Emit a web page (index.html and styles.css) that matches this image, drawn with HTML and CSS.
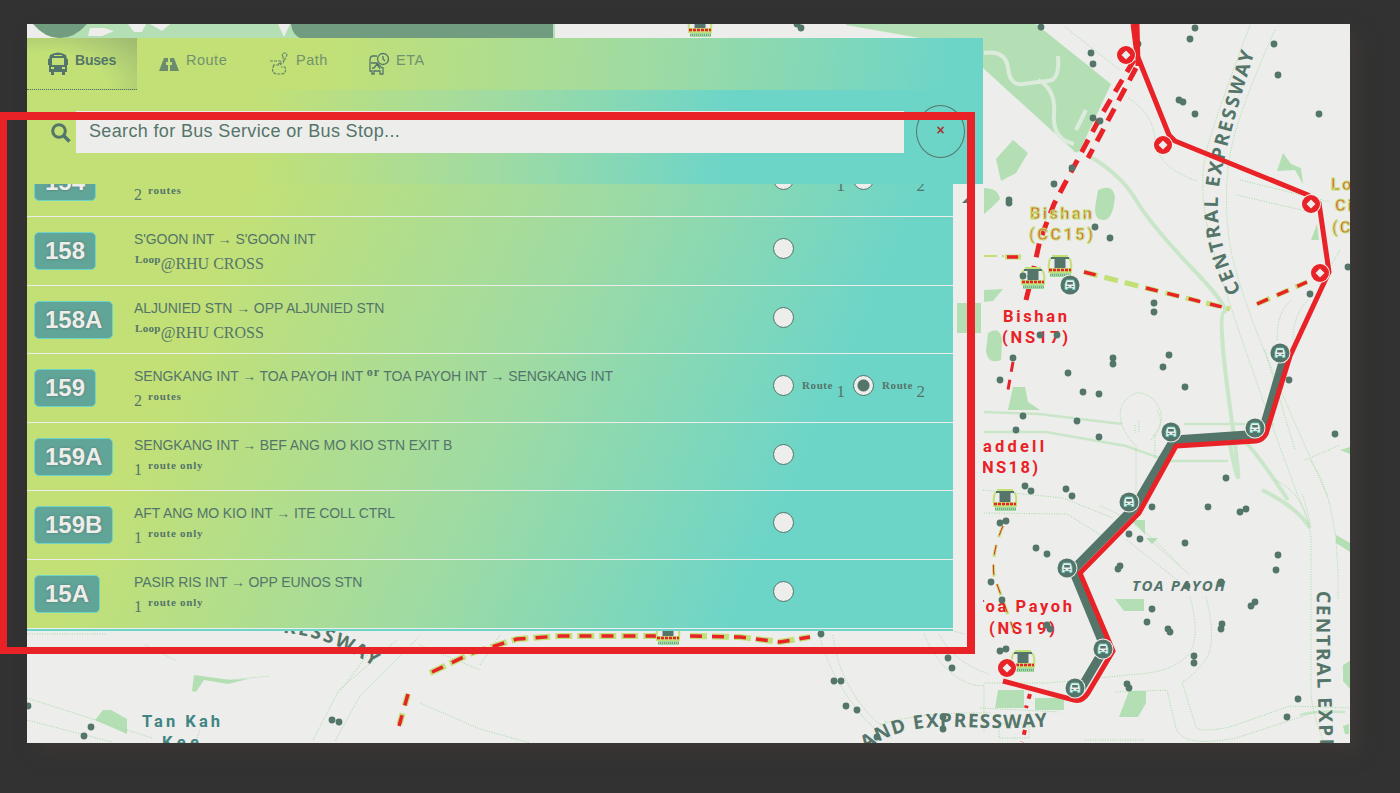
FILE: index.html
```html
<!DOCTYPE html>
<html lang="en">
<head>
<meta charset="utf-8">
<title>Bus routes</title>
<link rel="stylesheet" href="styles.css">
</head>
<body>
<main class="screen">
<svg class="map" viewBox="27 24 1323 719" aria-hidden="true">
  <defs>
    <g id="bus">
      <circle r="10.500" fill="#ededeb"/><circle r="9.500" fill="#54756a"/>
      <path d="M-3.500-5h7l1.500 4v5.500h-2.500v-1.500h-5v1.500h-2.500v-5.500z" fill="#ededeb" stroke="#6dd5c8" stroke-width=".8"/>
      <path d="M-2.800-3h5.600v2.500h-5.600zM-3.500 1h2v1h-2zM1.500 1h2v1h-2z" fill="#54756a"/>
    </g>
    <g id="stop"><circle r="10" fill="#ededeb"/><circle r="9" fill="#e82226"/><path d="M0-4.500 4.500 0 0 4.500-4.500 0z" fill="#ededeb"/></g>
    <g id="station">
      <path d="M-8-11h16l4 6v14h-24v-14z" fill="#ededeb"/>
      <path d="M-8-11h16M-9-9q-3 3-2 12M9-9q3 3 2 12" fill="none" stroke="#c2e076" stroke-width="2"/>
      <path d="M-9-10h18v2h-18z" fill="#54756a"/><path d="M-5.500-9h11v11h-11z" fill="#54756a"/>
      <path d="M-12 1h24v5h-24z" fill="#c2e076"/><path d="M-11 3h22" stroke="#e82226" stroke-width="2.500" stroke-dasharray="3 1"/>
      <path d="M-10 6h21v4h-21z" fill="#a0dba2"/><path d="M-10 8h21" stroke="#54756a" stroke-dasharray="1 1"/>
    </g>
  </defs>

  <g fill="#b4dfb4">
    <path d="M27 24H555V38H27z"/>
    <path d="M840 24h150v14H920zM983 24h53l75 60-31 66q-4 5-7 0L983 68z"/>
    <path d="M1013 140l15 13-12 20-15 8-5-22zM984 188q14 0 16 11l-9 9-7 6zM1098 190q15-7 17 7-2 22-11 23-12 0-8-18zM1283 153l8 11 10 4 2 16-8-14-18 1z"/>
    <path d="M984 290l19-1-10 12-9 1zM988 333q12-8 14 7l-1 20q-13 5-15-9zM1013 387h12l3 15 12 8h-32zM1131 520h14v14zM1146 538h12l-6 6z"/>
    <path d="M1115 599h29v12h-20zM998 690h26v18h-29zM1035 698h29v12h-29zM1129 691h17v12l-8 14h-19zM1343 665l7-4v28l-7-8z"/>
    <path d="M103 710h8l16 9v15l-32-14zM194 675l37 5 17-1-20 5-24-4-8 12-4-1zM1311 240l8 0-2-16zM1340 450l10-3v7zM1336 535l14 8v9l-14-9zM1343 726l6-2v10h-4z"/>
  </g>
  <path d="M27 24h7q10 14 26 14H27z" fill="#ededeb"/>
  <path d="M90 28h14l10 3-12 5h-14zM128 24h18l-4 8-8 0zM150 24h20l-8 7zM278 24h12l-6 13zM556 24h290v14H556z" fill="#ededeb"/>
  <path d="M33 24h54q-12 14-27 14T33 24zM291 24H553V38H300q-8-4-9-14z" fill="#719c80"/>

  <g fill="none" stroke="#c9e6c9" stroke-width="4">
    <path d="M1091 157q30 18 45 43t55 67 33 45 7 103 1 40 56 45M1262 490q35 17 48 38"/>
    <path stroke-width="2.500" d="M984 412l55 2 83 10M984 432h62l80 14 42 15h60M1184 424h90M1300 715q15-5 45-3"/>
  </g>
  <g fill="none" stroke="#dcebdc" stroke-width="4"><path d="M984 53q22-3 24 15t15 16 25-3 10-25M1038 80q18 9 16 34t20 30M1086 110l-10 20"/></g>
  <g fill="none" stroke="#a0dba2" stroke-width="1" stroke-dasharray="1 1.500">
    <path d="M1065 27l55 43M1128 98q25 15 27 42t42 41M1250 25q-32 85-42 120t-1 80 65 200 30 68M1275 30q-36 80-44 120t-2 88 55 160 43 96M1240 180l90 22M1237 195l73 17M1277 340q0-30 15-40M1293 340q0-25 15-40M1151 440q15-14 6-30M1136 446v50M1155 435v25"/>
    <path d="M1135 445q-20-22-13-40 14-22 33-4 14 18-3 36M1135 425v8M1139 421v12M1100 506q40 15 80 60M984 513l83 1 40 25"/>
    <path d="M1275 480q33 15 36 60v150q0 20 12 50M1310 460q30 40 28 140M1190 597q12 45-4 60t-48 17l-90 9h-65M1206 597q12 48-2 65t-22 20l14 45q4 6 34 0l60-21 60 2M1115 692l52-2 9 38q6 20 60 10l80-26M1127 540l50 40M1150 540l40 35M983 490l80 8 50 20"/>
    <path d="M820 638q10 35 32 65t40 35M833 635q4 37 27 68t26 17M924 634q12 28 30 41t30 10v48M939 634q14 28 50 40M27 698l125 40M27 720l85 22M341 690l30-40M313 740l26-50 58-50M335 741l25-45 60-60M420 703l60 26 50 14M500 635l-20 30M880 725q35-13 110-12M980 708l80 4M999 724h30v14h-30zM1085 740h60M27 634h80M420 645l60 25M145 645l30 15M230 680l40-4M200 730l-4 12M950 630l15 4"/>
    <path d="M1340 250l-12 20M1305 460l35-15M1265 350l30 100"/>
  </g>

  <g fill="#54756a">
    <path id="cte" d="M1241 291Q1208 230 1222 170Q1230 130 1256 48" fill="none"/>
    <text class="road-name"><textPath href="#cte" textLength="247">CENTRAL EXPRESSWAY</textPath></text>
    <path id="cte2" d="M1317 591q-2 60 3 152l4 160" fill="none"/>
    <text class="road-name"><textPath href="#cte2" textLength="246">CENTRAL EXPRESSWAY</textPath></text>
    <path id="pie" d="M866 750Q900 724 960 727T1060 725" fill="none"/>
    <text class="road-name"><textPath href="#pie" textLength="186">AND EXPRESSWAY</textPath></text>
    <path id="pie2" d="M283 633Q330 636 376 668" fill="none"/>
    <text class="road-name"><textPath href="#pie2" textLength="98">RESSWAY</textPath></text>
    <text class="district" x="1132" y="591" textLength="93">TOA PAYOH</text>
    <text class="station-name teal" x="142" y="727" textLength="78">Tan Kah</text>
    <text class="station-name teal" x="162" y="748" textLength="37">Kee</text>
  </g>

  <g fill="none" stroke="#c2e076" stroke-width="6">
    <path d="M984 256l20 0" stroke-width="2" stroke-dasharray="13 5"/><path d="M1005 257h16" stroke-width="5"/>
    <path d="M1084 272l66 17 80 20M1257 304l50-22" stroke-width="5" stroke-dasharray="14 7"/>
    <path d="M430 673l42-20 45-14 43-3h110M690 636l50 1 40 5 30-5" stroke-dasharray="17 5"/>
    <path d="M408 694l-9 32" stroke-dasharray="12 8"/>
    <path d="M1003 526q-12 27-9 50l20 55" stroke-width="3" stroke-dasharray="12 8"/>
  </g>
  <g fill="none" stroke="#e82226" stroke-width="4">
    <path d="M1134 60L1102 114 1054 204 1040 240 1033 272 1026 300" stroke-dasharray="14 9" stroke-width="5"/>
    <path d="M1013 362l-5 28" stroke-width="3" stroke-dasharray="10 8"/>
    <path d="M1136 68L1088 158" stroke-dasharray="14 9" stroke-width="5"/>
    <path d="M1146 288l84 21M1257 304l50-22M432 672l40-19 45-14 43-3h110M690 636l50 1 40 5 30-5M408 694l-9 32M1084 272l20 5M1007 257h11" stroke-width="3.500" stroke-dasharray="12 10"/>
    <path d="M1003 526q-12 27-9 50l20 55" stroke-width="1" stroke-dasharray="10 10"/>
    <path d="M1030 694l-4 14M1025 730l-3 12" stroke-dasharray="5 7"/>
  </g>

  <use href="#station" x="1060" y="267"/><use href="#station" x="1033" y="279"/><use href="#station" x="1005" y="501"/>
  <use href="#station" x="1023" y="662"/><use href="#station" x="668" y="635"/><use href="#station" x="700" y="27"/>

  <g>
    <text class="station-name lime" x="1030" y="219" textLength="64">Bishan</text><text class="station-name lime" x="1029" y="240" textLength="66">(CC15)</text>
    <text class="station-name lime" x="1331" y="190">Lo</text><text class="station-name lime" x="1335" y="211">Ci</text><text class="station-name lime" x="1332" y="233">(C</text>
    <text class="station-name red" x="1003" y="322" textLength="64">Bishan</text><text class="station-name red" x="1002" y="343" textLength="66">(NS17)</text>
    <text class="station-name red" x="974" y="452" textLength="70">raddell</text><text class="station-name red" x="974" y="473" textLength="64">(NS18)</text>
    <text class="station-name red" x="974" y="612" textLength="98">Toa Payoh</text><text class="station-name red" x="989" y="634" textLength="66">(NS19)</text>
  </g>

  <path class="stops" d="M1041 27h0M1091 53h0M1093 64h0M1195 28h0M1190 39h0M1274 44h0M1278 75h0M1179 100h0M1183 102h0M1195 114h0M1319 114h0M1093 118h0M1100 121h0M1072 168h0M1054 184h0M1009 200h0M1009 203h0M1095 227h0M1110 238h0M1138 44h0M1023 276h0M1031 277h0M1154 303h0M1154 312h0M1310 294h0M1348 267h0M1040 335h0M1057 335h0M1013 358h0M1000 380h0M1068 373h0M1113 358h0M1113 364h0M1169 355h0M1163 367h0M1185 387h0M1083 392h0M1099 394h0M1289 380h0M1023 416h0M1016 430h0M1077 421h0M1099 437h0M1335 434h0M1226 478h0M1025 486h0M1031 491h0M1066 489h0M1072 496h0M1152 507h0M1208 507h0M1240 512h0M1246 509h0M1000 523h0M1006 521h0M1036 548h0M1047 554h0M1129 534h0M1140 539h0M1185 543h0M1278 555h0M1276 570h0M1118 569h0M1120 566h0M991 582h0M1002 600h0M1187 586h0M1221 582h0M1251 606h0M1255 602h0M1152 609h0M1147 622h0M1168 629h0M1170 632h0M1222 624h0M1221 629h0M1047 625h0M1050 629h0M1000 651h0M1006 649h0M1194 656h0M1194 663h0M1127 684h0M1129 688h0M1298 699h0M1287 717h0M821 634h0M948 658h0M952 668h0M834 681h0M841 681h0M846 706h0M857 710h0M943 717h0M943 729h0M877 737h0M28 706h0M91 727h0M84 736h0M332 720h0M339 722h0M801 28h0M797 24h0"/>

  <path d="M1283 362L1262 434 1174 440 1134 508 1073 570 1105 648 1080 690" fill="none" stroke="#54756a" stroke-width="9" stroke-linejoin="round"/>
  <path d="M1133 24L1137 55 1169 135 1175 141 1308 195 1319 203 1329 272 1290 356 1266 434Q1263 440 1256 441L1176 446 1139 513 1080 573 1113 651 1088 693Q1082 702 1074 700L1003 681" fill="none" stroke="#e82226" stroke-width="5" stroke-linejoin="round"/>
  <path d="M1137 24L1138 66" stroke="#e82226" stroke-width="5"/>
  <use href="#bus" x="1280" y="353"/><use href="#bus" x="1255" y="428"/><use href="#bus" x="1171" y="432"/><use href="#bus" x="1129" y="502"/>
  <use href="#bus" x="1067" y="568"/><use href="#bus" x="1103" y="649"/><use href="#bus" x="1075" y="688"/><use href="#bus" x="1070" y="285"/>
  <use href="#stop" x="1126" y="55"/><use href="#stop" x="1163" y="145"/><use href="#stop" x="1311" y="204"/><use href="#stop" x="1320" y="273"/><use href="#stop" x="1007" y="668"/>
</svg>

<section class="panel">
  <nav class="tabs">
    <a class="tab active"><svg class="icon" width="22" height="24" viewBox="0 0 22 24"><path fill="#54756a" fill-rule="evenodd" d="M3 3q8-5 16 0l1 4h1v6h-1v7h-2v3h-3v-3H7v3H4v-3H2v-7H1V7h1zM5 6v7h12V6zM4 15v2h3v-2zM15 15v2h3v-2zM7 3v1h8V3z"/></svg><span>Buses</span></a>
    <a class="tab"><svg class="icon" width="20" height="24" viewBox="0 0 20 24"><path fill="#54756a" d="M5 6h4v4H7v3h2v6H0zM11 6h4l5 13h-9v-6h2v-3h-2z" opacity=".8"/></svg><span>Route</span></a>
    <a class="tab path"><svg class="icon" width="20" height="24" viewBox="0 0 20 24"><g fill="none" stroke="#54756a" stroke-width="1.200" opacity=".85"><path d="M14 5q-2-4 1.500-4t2 3l-3 6zM12 11l-3 1M1 9h10q3 2 0 4H4M5 13q-4 8 3 9h5q5-1 3-7h-4" stroke-dasharray="3 1"/></g></svg><span>Path</span></a>
    <a class="tab eta"><svg class="icon" width="20" height="24" viewBox="0 0 20 24"><g fill="none" stroke="#54756a" stroke-width="1.300"><circle cx="14" cy="7" r="5.500"/><path d="M14 4v3l2 2M8 4H4Q1 4 1 8v11h2v3h2v-3h6v3h3v-7M2 11h6l5 5M3 16h2l3-4 3 5"/></g></svg><span>ETA</span></a>
  </nav>
  <div class="search">
    <svg class="glass" width="22" height="22" viewBox="0 0 22 22"><circle cx="9" cy="9" r="6.300" fill="none" stroke="#54756a" stroke-width="3"/><path d="M13.500 13.500l6 6" stroke="#54756a" stroke-width="3.500"/></svg>
    <div class="field">Search for Bus Service or Bus Stop...</div>
    <button class="clear">×</button>
  </div>
  <div class="results">
    <div class="list">
      <div class="row first"><b class="badge">154</b><div class="info"><div class="title">&nbsp;</div><div class="sub">2 <sup>routes</sup></div></div><div class="choice"><i class="radio"></i><span class="opt">Route <em>1</em></span><i class="radio"></i><span class="opt">Route <em>2</em></span></div></div>
      <div class="row"><b class="badge">158</b><div class="info"><div class="title">S'GOON INT → S'GOON INT</div><div class="sub"><sup class="loop">Loop</sup>@RHU CROSS</div></div><div class="choice"><i class="radio"></i></div></div>
      <div class="row"><b class="badge">158A</b><div class="info"><div class="title">ALJUNIED STN → OPP ALJUNIED STN</div><div class="sub"><sup class="loop">Loop</sup>@RHU CROSS</div></div><div class="choice"><i class="radio"></i></div></div>
      <div class="row"><b class="badge">159</b><div class="info"><div class="title">SENGKANG INT → TOA PAYOH INT <sup>or</sup> TOA PAYOH INT → SENGKANG INT</div><div class="sub">2 <sup>routes</sup></div></div><div class="choice"><i class="radio"></i><span class="opt">Route <em>1</em></span><i class="radio on"></i><span class="opt">Route <em>2</em></span></div></div>
      <div class="row"><b class="badge">159A</b><div class="info"><div class="title">SENGKANG INT → BEF ANG MO KIO STN EXIT B</div><div class="sub">1 <sup>route only</sup></div></div><div class="choice"><i class="radio"></i></div></div>
      <div class="row"><b class="badge">159B</b><div class="info"><div class="title">AFT ANG MO KIO INT → ITE COLL CTRL</div><div class="sub">1 <sup>route only</sup></div></div><div class="choice"><i class="radio"></i></div></div>
      <div class="row"><b class="badge">15A</b><div class="info"><div class="title">PASIR RIS INT → OPP EUNOS STN</div><div class="sub">1 <sup>route only</sup></div></div><div class="choice"><i class="radio"></i></div></div>
    </div>
    <div class="track"><svg class="arrow" width="7" height="8" viewBox="0 0 7 8"><path d="M0 7h7V0z" fill="#54756a"/></svg><div class="thumb"></div></div>
  </div>
</section>
</main>
<div class="highlight"></div>
</body>
</html>
```
FILE: styles.css
```css
* { box-sizing: border-box; }
body { margin: 0; height: 793px; overflow: hidden; background: #323232; padding: 24px 50px 50px 27px; font-family: "Liberation Sans", Arial, sans-serif; color: #54756a; position: relative; }
.screen { position: relative; width: 1323px; height: 719px; background: #ededeb; overflow: hidden; padding-top: 14px; box-shadow: 10px 10px 16px #3b3735; }
.map { position: absolute; left: 0; top: 0; width: 1323px; height: 719px; }
.road-name { font: 700 19px "Noto Sans", sans-serif; }
.district { font: italic 700 15px "Noto Sans", sans-serif; }
.station-name { font: 700 16.500px Roboto, sans-serif; }
.red { fill: #e82226; }
.teal { fill: #3f8583; }
.lime { fill: #df5a32; stroke: #c2e076; stroke-width: 1px; letter-spacing: 2px; }
.stops { fill: none; stroke: #54756a; stroke-width: 6.800px; stroke-linecap: round; }

.panel { position: relative; width: 956px; }
.tabs { display: flex; height: 52px; background: linear-gradient(97deg, #c2e076 31%, #a0dba2 64%, #6dd5c8 96%); }
.tab { display: flex; gap: 7px; width: 110px; padding: 13px 0 0 22px; font-size: 14.500px; letter-spacing: .5px; }
.path { width: 99px; }
.eta { padding-left: 23px; }
.tab span { line-height: 19px; opacity: .72; }
.tab.active { font-weight: 700; font-size: 14px; letter-spacing: -.2px; gap: 6px; padding-left: 20px; border-bottom: 1px dotted #54756a; background: radial-gradient(ellipse at 15% 100%, #c2e076 50%, #86a26f 130%); }
.tab.active span { opacity: 1; }
.icon { flex: none; margin-top: 1px; }
.search { display: flex; align-items: flex-start; height: 94px; padding: 21px 0 0 23px; background: linear-gradient(95deg, #c2e076 24%, #a0dba2 49%, #6dd5c8 73%); }
.glass { margin-top: 11px; }
.field { width: 828px; height: 42px; margin-left: 4px; padding-left: 13px; background: #ededeb; font-size: 18px; line-height: 41px; letter-spacing: .35px; }
.clear { width: 49px; height: 53px; margin: -6px 0 0 12px; padding: 0 0 4px; border: 1px solid #54756a; border-radius: 50%; background: none; color: #a13a35; font: 700 14px "Liberation Sans", sans-serif; }
.results { display: flex; height: 447px; overflow: hidden; }
.list { position: relative; width: 926px; overflow: hidden; background: linear-gradient(114deg, #c2e076 20%, #a0dba2 51%, #6dd5c8 80%); border-bottom: 2px solid #6dd5c8; }
.track { width: 30px; background: #ededeb; padding: 12px 0 0 4px; }
.arrow { display: block; margin-left: 5px; }
.thumb { width: 24px; height: 30px; margin-top: 99px; background: #b4dfb4; }
.row { display: flex; height: 68.600px; border-bottom: 1.500px solid #ededeb; padding: 15px 0 0 7px; }
.first { margin-top: -35.600px; }
.badge { height: 38px; padding: 0 10px; border-radius: 5px; background: #61a599; border: 1px solid #6dd5c8; color: #ededeb; font-size: 24px; line-height: 36px; text-shadow: 0 0 3px #54756a; }
.info { position: absolute; left: 107px; margin-top: -1px; }
.title { font-size: 14px; line-height: 17px; letter-spacing: -.1px; white-space: nowrap; }
.title sup { font: 700 12px "Liberation Serif", serif; letter-spacing: .8px; vertical-align: 5px; line-height: 0; }
.sub { font: 16px/20px "Liberation Serif", serif; margin-top: 6px; }
.sub sup { margin-left: 2px; font-size: 11px; font-weight: 700; letter-spacing: .75px; line-height: 0; vertical-align: 6px; }
.sub .loop { margin-left: 1px; letter-spacing: .3px; }
.choice { position: absolute; left: 746px; display: flex; align-items: center; margin-top: 6px; }
.radio { width: 21px; height: 21px; border: 1px solid #54756a; border-radius: 50%; background: #ededeb; }
.on { background: radial-gradient(circle, #54756a 5.500px, #ededeb 6.500px); }
.opt { width: 59px; height: 21px; padding-left: 8px; font: 700 11px/21px "Liberation Serif", serif; letter-spacing: .6px; white-space: nowrap; }
.opt em { position: relative; top: 3px; font: 17px/10px "Liberation Serif", serif; vertical-align: -5px; }
.highlight { position: absolute; left: 0; top: 112px; width: 975px; height: 542px; border: 8px solid #e82226; border-left-width: 7px; border-bottom-width: 7px; }
```
